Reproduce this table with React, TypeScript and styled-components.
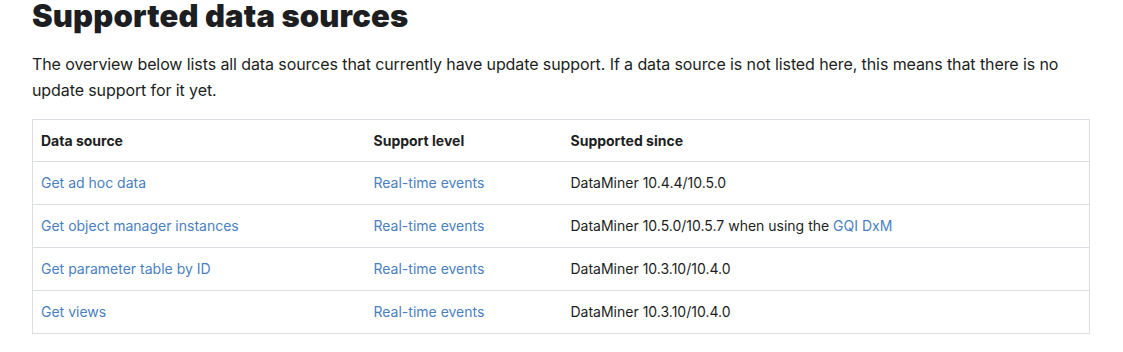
import styled, {createGlobalStyle} from "styled-components";

type Row = {
    source: string;
    level: string;
    since: string;
    link?: string;
};

const rows: Row[] = [
    {source: "Get ad hoc data", level: "Real-time events", since: "DataMiner 10.4.4/10.5.0"},
    {
        source: "Get object manager instances",
        level: "Real-time events",
        since: "DataMiner 10.5.0/10.5.7 when using the ",
        link: "GQI DxM"
    },
    {source: "Get parameter table by ID", level: "Real-time events", since: "DataMiner 10.3.10/10.4.0"},
    {source: "Get views", level: "Real-time events", since: "DataMiner 10.3.10/10.4.0"},
];

const GlobalStyle = createGlobalStyle`
    body {
        margin: 0;
        background: #ffffff;
        font-family: Inter, "Liberation Sans", sans-serif;
        color: #1c1e21;
    }
`;

const App = () => {
    return (
        <>
            <GlobalStyle/>
            <Page>
                <Title>Supported data sources</Title>
                <Intro>
                    The overview below lists all data sources that currently have update support. If a data source
                    is not listed here, this means that there is no update support for it yet.
                </Intro>

                <Table>
                    <colgroup>
                        <col style={{width: 333}}/>
                        <col style={{width: 197}}/>
                        <col/>
                    </colgroup>
                    <thead>
                    <tr>
                        <Th>Data source</Th>
                        <Th>Support level</Th>
                        <Th>Supported since</Th>
                    </tr>
                    </thead>
                    <tbody>
                    {rows.map(row => (
                        <tr key={row.source}>
                            <Td><Link href="#">{row.source}</Link></Td>
                            <Td><Link href="#">{row.level}</Link></Td>
                            <Td>
                                {row.since}
                                {row.link && <Link href="#">{row.link}</Link>}
                            </Td>
                        </tr>
                    ))}
                    </tbody>
                </Table>
            </Page>
        </>
    );
};

export default App;

const Page = styled.div`
    padding: 0 33px 0 32px;
    width: 1058px;
`;

const Title = styled.h1`
    margin: 0;

    font-family: Inter, "Liberation Sans", sans-serif;
    font-size: 31px;
    font-weight: 900;
    line-height: 32px;
    letter-spacing: 0.005em;

    color: #1c1e21;
`;

const Intro = styled.p`
    margin: 19px 0 0;

    font-size: 16px;
    line-height: 26px;
    letter-spacing: -0.006em;

    color: #1c1e21;
`;

const Table = styled.table`
    margin-top: 16px;
    width: 1058px;

    border: 1px solid #dadde1;
    border-collapse: collapse;
    table-layout: fixed;

    font-size: 14px;
    line-height: 18px;
`;

const Th = styled.th`
    padding: 12px 8px 11px;

    border-bottom: 1px solid #dadde1;

    text-align: left;
    font-weight: 700;

    color: #1c1e21;
`;

const Td = styled.td`
    padding: 12px 8px;

    border-bottom: 1px solid #dadde1;

    color: #1c1e21;
`;

const Link = styled.a`
    color: #4a7fc1;
    text-decoration: none;
`;
